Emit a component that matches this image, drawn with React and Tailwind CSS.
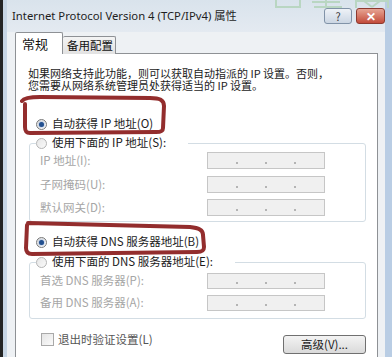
import React from "react";

const cjk = { fontFamily: '"Noto Sans CJK SC", "Noto Sans", sans-serif' };

// radio button circle
const Radio = ({ checked }) => (
  <span
    className={`w-[11px] h-[11px] rounded-full border flex items-center justify-center shrink-0 ${
      checked
        ? "border-[#7a7a7a] bg-linear-to-br from-[#dcdcdc] to-[#ffffff]"
        : "border-[#b4b4b4] bg-linear-to-br from-[#e6e6e6] to-[#fafafa]"
    }`}
  >
    {checked && <span className="w-[5px] h-[5px] rounded-full bg-[#23508f] shadow-[0_0_2px_#5b8ad0]" />}
  </span>
);

const RadioRow = ({ checked, label }) => (
  <div className="flex items-center gap-[5px] h-full">
    <Radio checked={checked} />
    <span className="text-[11.5px] text-[#1b1b1b] whitespace-nowrap leading-none">{label}</span>
  </div>
);

// disabled ip field with 3 dots
const IpBox = ({ h = "h-[17px]" }) => (
  <div className={`w-[118px] ${h} border border-[#c6c6c6] bg-[#f0f0f0] flex`}>
    {[0, 1, 2, 3].map((i) => (
      <div key={i} className="flex-1 flex items-end justify-end">
        {i < 3 && <span className="w-[2px] h-[2px] bg-[#b4b4b4] mb-[4px] -mr-[1px]" />}
      </div>
    ))}
  </div>
);

const FieldRow = ({ label, h, className = "" }) => (
  <div className={`flex items-center ${className}`}>
    <span className="w-[167px] text-[11.5px] text-[#a6a6a6] whitespace-nowrap leading-none">{label}</span>
    <IpBox h={h} />
  </div>
);

export default function App() {
  return (
    <div className="w-[392px] h-[357px] overflow-hidden relative flex bg-[#eef1f4]" style={cjk}>
      {/* left edge */}
      <div className="w-[3px] bg-[#242424] shrink-0" />
      <div className="w-[4px] bg-[#c7d5e4] shrink-0" />

      <div className="flex-1 flex flex-col">
        {/* title bar */}
        <div className="h-[32px] shrink-0 flex items-center pl-[5px] bg-linear-to-b from-[#d9e3ec] to-[#e4eaf1]">
          <span
            className="text-[11.3px] text-[#1e1e1e] whitespace-nowrap"
            style={{ fontFamily: '"Noto Sans", "Noto Sans CJK SC", sans-serif' }}
          >
            Internet Protocol Version 4 (TCP/IPv4) 属性
          </span>
          <div className="ml-auto flex items-center gap-[4px]">
            <div className="w-[28px] h-[16px] rounded-[3px] border border-[#8193a8] bg-linear-to-b from-[#eef2f7] to-[#cbd6e3] flex items-center justify-center text-[11px] text-[#3a3a3a] leading-none">
              ?
            </div>
            <div className="w-[29px] h-[16px] rounded-[3px] border border-[#8d3a2f] bg-linear-to-b from-[#e6a493] to-[#c24a3a] flex items-center justify-center text-[12px] font-bold text-white leading-none">
              ✕
            </div>
          </div>
        </div>

        {/* tabs */}
        <div className="flex items-end pl-[8px] h-[22px] shrink-0 -mb-[1px] relative z-10">
          <div className="w-[48px] h-[22px] border border-b-0 border-[#8e9195] bg-white rounded-t-[2px] flex items-center pl-[6px] text-[13px] text-[#111]">
            常规
          </div>
          <div className="w-[53px] h-[18px] border border-l-0 border-b-0 border-[#8e9195] bg-linear-to-b from-[#f4f4f4] to-[#e2e2e2] rounded-t-[2px] flex items-center pl-[4px] text-[11.5px] text-[#111]">
            备用配置
          </div>
        </div>

        {/* tab panel */}
        <div className="ml-[8px] mr-[7px] h-[330px] border border-[#8e9195] bg-white flex flex-col shrink-0">
          <div className="mt-[13px] pl-[12px] text-[11px] leading-[12px] text-[#1b1b1b] whitespace-nowrap">
            <div>如果网络支持此功能，则可以获取自动指派的 IP 设置。否则，</div>
            <div>您需要从网络系统管理员处获得适当的 IP 设置。</div>
          </div>

          <div className="mt-[23px] ml-[20px] h-[20px] shrink-0">
            <RadioRow checked label="自动获得 IP 地址(O)" />
          </div>

          <fieldset className="ml-[13px] mr-[11px] border border-[#d3dde4] rounded-[3px] pb-[5px] shrink-0">
            <legend className="ml-[6px] pr-[22px] h-[18px]">
              <RadioRow label="使用下面的 IP 地址(S):" />
            </legend>
            <div className="pl-[10px] flex flex-col">
              <FieldRow label="IP 地址(I):" />
              <FieldRow label="子网掩码(U):" className="mt-[7px]" />
              <FieldRow label="默认网关(D):" className="mt-[6px]" />
            </div>
          </fieldset>

          <div className="mt-[10px] ml-[20px] h-[20px] shrink-0">
            <RadioRow checked label="自动获得 DNS 服务器地址(B)" />
          </div>

          <fieldset className="mt-[1px] ml-[13px] mr-[11px] border border-[#d3dde4] rounded-[3px] pb-[7px] shrink-0">
            <legend className="ml-[6px] pr-[22px] h-[18px]">
              <RadioRow label="使用下面的 DNS 服务器地址(E):" />
            </legend>
            <div className="pl-[10px] flex flex-col">
              <FieldRow label="首选 DNS 服务器(P):" h="h-[16px]" className="mt-[2px]" />
              <FieldRow label="备用 DNS 服务器(A):" h="h-[16px]" className="mt-[6px]" />
            </div>
          </fieldset>

          <div className="mt-[14px] ml-[25px] mr-[11px] h-[22px] flex items-start shrink-0">
            <div className="flex items-center h-[13px]">
              <span className="w-[13px] h-[13px] border border-[#a9a9a9] bg-linear-to-br from-[#e4e4e4] to-[#fbfbfb] shrink-0" />
              <span className="ml-[4px] text-[11.5px] text-[#555] leading-none">退出时验证设置(L)</span>
            </div>
            <button className="ml-auto mt-[2px] w-[83px] h-[19px] rounded-[3px] border border-[#707070] bg-linear-to-b from-[#f3f3f3] to-[#dadada] text-[11.5px] text-[#1b1b1b] leading-none">
              高级(V)...
            </button>
          </div>
        </div>
      </div>

      {/* right frame */}
      <div className="w-[7px] bg-[#b9cde4] shrink-0" />

      {/* faint watermark at top right */}
      <svg className="absolute top-0 left-0 pointer-events-none" width="392" height="10">
        <g stroke="#b9d6c2" strokeWidth="2" fill="none">
          <path d="M276 0 V7 H300 V0" />
          <path d="M312 2 H340 M326 0 V7 M314 7 H342" />
          <path d="M356 0 V8 M356 1 H388 V8 M364 1 L372 7 M380 1 L372 7" />
        </g>
      </svg>

      {/* red marker annotations */}
      <svg className="absolute top-0 left-0 pointer-events-none" width="392" height="357">
        <g stroke="#8a1c1c" strokeWidth="4" fill="none" strokeLinecap="round" strokeLinejoin="round" opacity="0.92">
          <path d="M22 101 C24 98 30 97 40 97 L150 98 C160 98 164 100 164 106 L163 128 C163 131 161 132 156 132 L30 133 C26 133 25 131 25 127 L25 104" />
          <path d="M28 223 L190 227 C199 228 203 230 203 235 L204 247 C204 251 202 252 197 252 L32 254 C28 254 26 252 26 248 L27 225" />
        </g>
      </svg>
    </div>
  );
}
